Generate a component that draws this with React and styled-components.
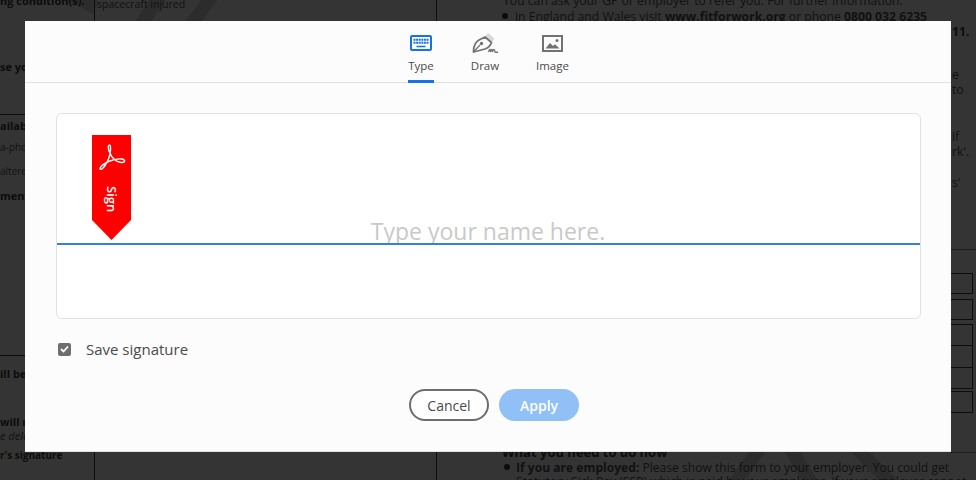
import styled, { createGlobalStyle } from "styled-components";
import { useState } from "react";

const Global = createGlobalStyle`
  html, body {
    margin: 0;
    padding: 0;
    width: 976px;
    height: 480px;
    overflow: hidden;
    background: #343434;
    font-family: "Open Sans", "Liberation Sans", sans-serif;
  }
  * { box-sizing: border-box; }
`;

const Page = styled.div`
  position: relative;
  width: 976px;
  height: 480px;
  overflow: hidden;
  background: #343434;
`;

const Watermark = styled.svg`
  position: absolute;
  inset: 0;
  width: 976px;
  height: 480px;
`;

// the dimmed pdf behind the dialog is a free canvas, so its bits sit at their own coordinates
const DocText = styled.div`
  position: absolute;
  left: ${(p) => p.$x}px;
  top: ${(p) => p.$y}px;
  font-size: ${(p) => p.$size || 12.2}px;
  line-height: 13px;
  white-space: nowrap;
  color: #0c0c0c;
  font-weight: ${(p) => (p.$bold ? 700 : 400)};
  font-style: ${(p) => (p.$italic ? "italic" : "normal")};
  opacity: ${(p) => (p.$bold ? 1 : 0.85)};
  b { font-weight: 700; }
`;

const DocDot = styled.span`
  position: absolute;
  left: ${(p) => p.$x}px;
  top: ${(p) => p.$y}px;
  width: 6px;
  height: 6px;
  border-radius: 50%;
  background: #0c0c0c;
`;

const Rule = styled.div`
  position: absolute;
  left: ${(p) => p.$x}px;
  top: ${(p) => p.$y}px;
  width: ${(p) => p.$w}px;
  height: 1px;
  background: ${(p) => p.$color || "#0d0d0d"};
`;

const VRule = styled.div`
  position: absolute;
  left: ${(p) => p.$x}px;
  top: ${(p) => p.$y}px;
  width: 1px;
  height: ${(p) => p.$h}px;
  background: #0d0d0d;
`;

const DocBox = styled.div`
  position: absolute;
  left: 940px;
  top: ${(p) => p.$y}px;
  width: 33px;
  height: ${(p) => p.$h}px;
  border: 1px solid #0d0d0d;
`;

const Dialog = styled.div`
  position: absolute;
  left: 25px;
  top: 21px;
  width: 926px;
  height: 431px;
  background: #fcfcfc;
  border-bottom: 1px solid #e2e2e2;
  display: flex;
  flex-direction: column;
`;

const Tabs = styled.div`
  height: 62px;
  flex-shrink: 0;
  border-bottom: 1px solid #e1e1e1;
  display: flex;
  justify-content: center;
  padding-left: 1px;
  gap: 37.5px;
`;

const Tab = styled.div`
  position: relative;
  width: ${(p) => p.$w}px;
  display: flex;
  flex-direction: column;
  align-items: center;
  padding-top: ${(p) => p.$top}px;
  font-size: 11.5px;
  line-height: 16px;
  color: #4b4b4b;

  ${(p) =>
    p.$active &&
    `&::after {
      content: "";
      position: absolute;
      left: 0;
      right: 0;
      bottom: -1px;
      height: 3px;
      background: #1473e6;
    }`}
`;

const TabIcon = styled.svg`
  display: block;
  flex-shrink: 0;
  margin-bottom: ${(p) => p.$gap}px;
`;

const Body = styled.div`
  flex: 1;
  display: flex;
  flex-direction: column;
  padding: 30px 30px 30px 31px;
`;

const SignCard = styled.div`
  position: relative;
  height: 206px;
  background: #fff;
  border: 1px solid #e1e1e1;
  border-radius: 6px;
  display: flex;
  flex-direction: column;
`;

const NameField = styled.div`
  height: 131px;
  flex-shrink: 0;
  border-bottom: 2px solid #3583cf;
  display: flex;
  align-items: flex-end;
  justify-content: center;
`;

const NameInput = styled.input`
  width: 100%;
  border: 0;
  outline: 0;
  background: transparent;
  text-align: center;
  font-family: "Open Sans", "Liberation Sans", sans-serif;
  font-size: 23px;
  line-height: 28px;
  height: 24px;
  padding: 0 1px 0 0;
  color: #333;

  &::placeholder { color: #c9c9c9; opacity: 1; }
`;

const SignTag = styled.div`
  position: absolute;
  left: 35px;
  top: 21px;
  width: 39px;
  height: 105px;
  background: #f00;
  clip-path: polygon(0 0, 100% 0, 100% 85px, 50% 100%, 0 85px);
  display: flex;
  flex-direction: column;
  align-items: center;
  padding-top: 9px;
  color: #fff;
`;

const SignLabel = styled.span`
  writing-mode: vertical-rl;
  font-size: 13px;
  font-weight: 600;
  line-height: 14px;
  margin-top: 14px;
`;

const SaveRow = styled.label`
  display: flex;
  align-items: center;
  margin-top: 19px;
  padding-left: 2px;
  height: 22px;
  font-size: 15px;
  color: #4b4b4b;
  gap: 15px;
`;

const CheckBox = styled.span`
  width: 13px;
  height: 13px;
  border-radius: 2px;
  background: #6e6e6e;
  display: flex;
  align-items: center;
  justify-content: center;
`;

const Actions = styled.div`
  margin-top: 29px;
  display: flex;
  justify-content: center;
  gap: 10px;
  padding-left: 11px;
`;

const Button = styled.button`
  width: 80px;
  height: 32px;
  border-radius: 16px;
  font-family: "Open Sans", "Liberation Sans", sans-serif;
  font-size: 14px;
  padding: 0;
  border: ${(p) => (p.$primary ? "0" : "2px solid #6e6e6e")};
  background: ${(p) => (p.$primary ? "#90c0f5" : "#fff")};
  color: ${(p) => (p.$primary ? "#fff" : "#4b4b4b")};
  font-weight: ${(p) => (p.$primary ? 600 : 400)};
`;

const KeyboardIcon = () => (
  <TabIcon $gap={7} width="22" height="16" viewBox="0 0 22 16">
    <rect x="1" y="1" width="20" height="14" rx="1" fill="none" stroke="#1473e6" strokeWidth="2" />
    <path d="M3.500 4.800h15M3.500 7.800h15" stroke="#1473e6" strokeWidth="2" strokeDasharray="2 .6" />
    <path d="M6.500 11.500h9" stroke="#1473e6" strokeWidth="1.500" />
  </TabIcon>
);

const PenIcon = () => (
  <TabIcon $gap={5} width="27" height="20" viewBox="0 0 27 20">
    <path d="M16 0l6.500 5.500-2.500 3.300-6.500-5.500z" fill="#d8d8d8" />
    <path d="M13 4l6.500 5.500c-1.300 3.500-3.500 5.500-6.500 6.500L1.500 19c0-5 2-10 5.500-12z" fill="none" stroke="#717171" strokeWidth="1.800" strokeLinejoin="round" />
    <path d="M1.500 19l6.500-7" stroke="#717171" strokeWidth="1.300" />
    <circle cx="9.500" cy="10.500" r="1.700" fill="#717171" />
    <path d="M16.500 19c1-3.500 2-3.500 2 0 1-3.500 2-3.500 2 0 1-3.500 2-3.500 2.500 0 .6.500 1.500.500 3 0" fill="none" stroke="#717171" strokeWidth="1.400" />
  </TabIcon>
);

const ImageIcon = () => (
  <TabIcon $gap={6} width="21" height="17" viewBox="0 0 21 17">
    <rect x="1" y="1" width="19" height="15" fill="none" stroke="#717171" strokeWidth="2" />
    <path d="M3.500 13.500l4.500-5.500 3 3 2-1.800 4.500 4.300z" fill="#717171" />
    <circle cx="15" cy="5.500" r="1.500" fill="#717171" />
  </TabIcon>
);

const AcrobatIcon = () => (
  <svg width="28" height="28" viewBox="0 0 28 28">
    <path
      d="M11.500 1c-1.500 0-1.500 3-.5 6 1 3 3.500 7 6 9 2.500 2 8 3.500 9.500 1.500.7-1.200-1-2.300-3-2.500-4-.4-9 .7-13 2.500-4 2-8 5-8.500 7-.2 1 1 1.200 2 .5 3.500-2.500 7-10 8-15 .6-3 1-9-.5-9z"
      fill="none"
      stroke="#fff"
      strokeWidth="1.400"
    />
  </svg>
);

const docLines = [
  { x: 0, y: -6, text: "ng condition(s).", bold: true, size: 11 },
  { x: 97, y: -2, text: "spacecraft injured", size: 10.5 },
  { x: 0, y: 60, text: "se you", bold: true, size: 11 },
  { x: 0, y: 119, text: "ailab", bold: true, size: 11 },
  { x: 0, y: 141, text: "a-pho", size: 10 },
  { x: 0, y: 165, text: "altere", size: 10 },
  { x: 0, y: 189, text: "ments", bold: true, size: 11 },
  { x: 0, y: 367, text: "ill be", bold: true, size: 11 },
  { x: 0, y: 415, text: "will n", bold: true, size: 11 },
  { x: 0, y: 429, text: "e dele", italic: true, size: 11 },
  { x: 0, y: 449, text: "r's signature", bold: true, size: 10 },
  { x: 503, y: -6, text: "You can ask your GP or employer to refer you. For further information:" },
  { x: 515, y: 10, html: <>in England and Wales visit <b>www.fitforwork.org</b> or phone <b>0800 032 6235</b></> },
  { x: 952, y: 25, text: "11.", bold: true },
  { x: 952, y: 68, text: "e" },
  { x: 952, y: 83, text: "to" },
  { x: 952, y: 130, text: "if" },
  { x: 952, y: 145, text: "rk'." },
  { x: 952, y: 176, text: "s'" },
  { x: 502, y: 446, text: "What you need to do now", bold: true, size: 13 },
  { x: 516, y: 461, size: 12.1, html: <><b>If you are employed:</b> Please show this form to your employer. You could get</> },
  { x: 516, y: 475, size: 12.1, text: "Statutory Sick Pay (SSP) which is paid by your employer. If your employer cannot" },
];

const boxes = [
  { y: 273, h: 21 },
  { y: 299, h: 21 },
  { y: 324, h: 22 },
  { y: 345, h: 23 },
  { y: 367, h: 22 },
  { y: 391, h: 22 },
];

const App = () => {
  const [name, setName] = useState("");
  return (
    <Page>
      <Global />
      <Watermark viewBox="0 0 976 480">
        <path
          d="M70 -6L96 8M212 -4L190 26M160 -4L140 26M760 448L734 484M790 448L812 484M856 448L892 484"
          stroke="#2c2c2c"
          strokeWidth="13"
          fill="none"
        />
      </Watermark>
      {docLines.map((l, i) => (
        <DocText key={i} $x={l.x} $y={l.y} $bold={l.bold} $italic={l.italic} $size={l.size}>
          {l.html || l.text}
        </DocText>
      ))}
      <DocDot $x={502} $y={13} />
      <DocDot $x={504} $y={464} />
      <VRule $x={94} $y={0} $h={24} />
      <VRule $x={94} $y={450} $h={30} />
      <VRule $x={436} $y={0} $h={24} />
      <VRule $x={436} $y={450} $h={30} />
      <Rule $x={0} $y={114} $w={26} />
      <Rule $x={0} $y={355} $w={26} />
      <Rule $x={950} $y={249} $w={26} $color="#1c1c1c" />
      <Rule $x={950} $y={452} $w={26} $color="#1c1c1c" />
      {boxes.map((b, i) => (
        <DocBox key={i} $y={b.y} $h={b.h} />
      ))}

      <Dialog>
        <Tabs>
          <Tab $active $w={26} $top={14}>
            <KeyboardIcon />
            Type
          </Tab>
          <Tab $w={27} $top={12}>
            <PenIcon />
            Draw
          </Tab>
          <Tab $w={33} $top={14}>
            <ImageIcon />
            Image
          </Tab>
        </Tabs>
        <Body>
          <SignCard>
            <NameField>
              <NameInput
                placeholder="Type your name here."
                value={name}
                onChange={(e) => setName(e.target.value)}
              />
            </NameField>
            <SignTag>
              <AcrobatIcon />
              <SignLabel>Sign</SignLabel>
            </SignTag>
          </SignCard>
          <SaveRow>
            <CheckBox>
              <svg width="9" height="8" viewBox="0 0 9 8">
                <path d="M1 4l2.500 2.500L8 1.500" fill="none" stroke="#fff" strokeWidth="1.800" />
              </svg>
            </CheckBox>
            Save signature
          </SaveRow>
          <Actions>
            <Button>Cancel</Button>
            <Button $primary>Apply</Button>
          </Actions>
        </Body>
      </Dialog>
    </Page>
  );
};

export default App;
